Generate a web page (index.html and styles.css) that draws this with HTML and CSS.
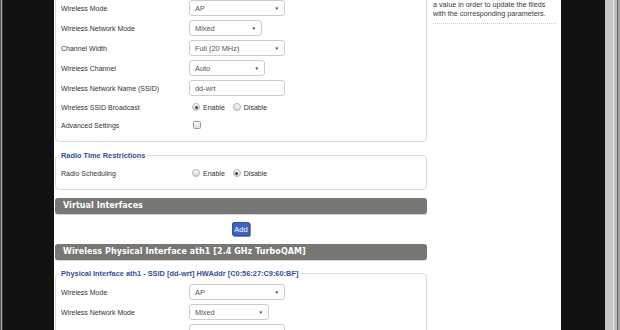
FILE: index.html
```html
<!DOCTYPE html>
<html lang="en">
<head>
    <meta charset="UTF-8">
    <meta name="viewport" content="width=device-width, initial-scale=1.0">
    <title>Wireless - Basic Settings</title>
    <link rel="stylesheet" href="styles.css">
</head>
<body>
    <div id="frame">
        <div class="edge-left"></div>
        <div id="page">
            <div class="page-inner">
                <div class="content">
                    <fieldset class="group first">
                        <legend>Physical Interface ath0 - SSID [dd-wrt] HWAddr [C0:56:27:C9:60:BE]</legend>
                        <div class="row">
                            <span class="label">Wireless Mode</span>
                            <span class="select w96"><span>AP</span><span class="arrow">&#9660;</span></span>
                        </div>
                        <div class="row">
                            <span class="label">Wireless Network Mode</span>
                            <span class="select w73"><span>Mixed</span><span class="arrow">&#9660;</span></span>
                        </div>
                        <div class="row">
                            <span class="label">Channel Width</span>
                            <span class="select w96"><span>Full (20 MHz)</span><span class="arrow">&#9660;</span></span>
                        </div>
                        <div class="row">
                            <span class="label">Wireless Channel</span>
                            <span class="select w76"><span>Auto</span><span class="arrow">&#9660;</span></span>
                        </div>
                        <div class="row">
                            <span class="label">Wireless Network Name (SSID)</span>
                            <span class="textbox w96">dd-wrt</span>
                        </div>
                        <div class="row short">
                            <span class="label">Wireless SSID Broadcast</span>
                            <span class="radio on"></span><span class="opt">Enable</span>
                            <span class="radio"></span><span class="opt">Disable</span>
                        </div>
                        <div class="row short">
                            <span class="label">Advanced Settings</span>
                            <span class="checkbox"></span>
                        </div>
                    </fieldset>

                    <fieldset class="group">
                        <legend>Radio Time Restrictions</legend>
                        <div class="row short">
                            <span class="label">Radio Scheduling</span>
                            <span class="radio"></span><span class="opt">Enable</span>
                            <span class="radio on"></span><span class="opt">Disable</span>
                        </div>
                    </fieldset>

                    <h2 class="bar">Virtual Interfaces</h2>
                    <div class="actions">
                        <button class="btn">Add</button>
                    </div>

                    <h2 class="bar">Wireless Physical Interface ath1 [2.4 GHz TurboQAM]</h2>
                    <fieldset class="group">
                        <legend>Physical Interface ath1 - SSID [dd-wrt] HWAddr [C0:56:27:C9:60:BF]</legend>
                        <div class="row">
                            <span class="label">Wireless Mode</span>
                            <span class="select w96"><span>AP</span><span class="arrow">&#9660;</span></span>
                        </div>
                        <div class="row">
                            <span class="label">Wireless Network Mode</span>
                            <span class="select w80"><span>Mixed</span><span class="arrow">&#9660;</span></span>
                        </div>
                        <div class="row">
                            <span class="label">Channel Width</span>
                            <span class="select w96"><span>Full (20 MHz)</span><span class="arrow">&#9660;</span></span>
                        </div>
                        <div class="row">
                            <span class="label">Wireless Channel</span>
                            <span class="select w76"><span>Auto</span><span class="arrow">&#9660;</span></span>
                        </div>
                    </fieldset>
                </div>

                <div class="help">
                    <p>Wireless Mode: choose the working mode<br>
                    of the radio; you may also simply pick up<br>
                    a value in order to update the fileds<br>
                    with the corresponding parameters.</p>
                </div>
            </div>
        </div>
        <div class="edge-right"></div>
        <div class="scrollbar"></div>
    </div>
</body>
</html>
```

FILE: styles.css
```css
body {
    margin: 0;
    padding: 0;
    font-family: "Liberation Sans", Arial, sans-serif;
    font-size: 7px;
    line-height: 9px;
    color: #333;
    background-color: #111;
}
#frame {
    display: flex;
    height: 330px;
    overflow: hidden;
}
.edge-left {
    width: 54px;
    background: linear-gradient(to right, #555 0, #555 1px, #a8a8a8 1px, #a8a8a8 2px, #3a3a3a 2px, #3a3a3a 3px, #121212 3px);
}
#page {
    width: 507px;
    background-color: #fff;
    overflow: hidden;
}
.page-inner {
    display: flex;
    margin-top: -22px;
}
.content {
    width: 372px;
    margin-left: 1px;
}
.edge-right {
    width: 44px;
    background-color: #121212;
}
.scrollbar {
    width: 15px;
    background: linear-gradient(to right, #c6c6c6 0, #c6c6c6 8px, #ececec 8px, #ececec 9px, #bdbdbd 9px, #bdbdbd 12px, #6a6a6a 12px, #6a6a6a 13px, #a0a0a0 13px);
}

/* groups */
.group {
    margin: 9px 0 0 0;
    padding: 4px 5px 7px 5px;
    border: 1px solid #ddd;
    border-radius: 4px;
}
.group.first {
    margin-top: 0;
    padding-top: 11px;
}
.group legend {
    margin-left: -2px;
    padding: 0 2px;
    font-size: 7.4px;
    line-height: 9px;
    font-weight: bold;
    color: #2f4f9f;
}
.row {
    display: flex;
    align-items: center;
    height: 20px;
}
.row.short {
    height: 18px;
}
.label {
    width: 128px;
    flex-shrink: 0;
}

/* controls */
.select,
.textbox {
    display: flex;
    align-items: center;
    justify-content: space-between;
    box-sizing: border-box;
    height: 16px;
    padding: 0 5px;
    border: 1px solid #ccc;
    border-radius: 3px;
    background-color: #fff;
    font-size: 7.4px;
    color: #555;
}
.arrow {
    font-size: 4.5px;
    color: #333;
}
.w96 { width: 96px; }
.w80 { width: 80px; }
.w76 { width: 76px; }
.w73 { width: 73px; }

.radio {
    display: flex;
    align-items: center;
    justify-content: center;
    box-sizing: border-box;
    width: 8px;
    height: 8px;
    margin: 0 3px 0 3px;
    border: 1px solid #b4b4b4;
    border-radius: 50%;
    background: linear-gradient(#fdfdfd, #d6d6d6);
}
.radio.on::after {
    content: '';
    width: 3px;
    height: 3px;
    border-radius: 50%;
    background-color: #444;
}
.opt {
    margin-right: 5px;
}
.checkbox {
    box-sizing: border-box;
    width: 8px;
    height: 8px;
    margin-left: 4px;
    border: 1px solid #9a9a9a;
    border-radius: 1.5px;
    background: linear-gradient(#f8f8f8, #dedede);
}

/* section bars */
.bar {
    margin: 8px 0 0 0;
    height: 16px;
    padding-left: 8px;
    border-radius: 3px;
    background-color: #797773;
    box-shadow: 0 1px 0 #d4d4d4;
    font-family: "DejaVu Sans", Verdana, sans-serif;
    font-size: 8px;
    line-height: 16px;
    font-weight: bold;
    letter-spacing: 0.06px;
    color: #fff;
}
.actions {
    display: flex;
    justify-content: center;
    padding-top: 8px;
}
.btn {
    box-sizing: border-box;
    width: 18px;
    height: 14px;
    padding: 0;
    border: 1px solid #2e51ab;
    border-radius: 2px;
    background-color: #3d63c8;
    box-shadow: 1px 1px 0 #8a8a8a;
    font-family: "Liberation Sans", Arial, sans-serif;
    font-size: 7.5px;
    color: #fff;
}

/* help column */
.help {
    width: 123px;
    margin-left: 6px;
    padding-top: 4px;
}
.help p {
    margin: 0;
    padding-bottom: 5px;
    border-bottom: 1px dotted #ccc;
    font-size: 7.2px;
    line-height: 9px;
    color: #3a3a3a;
    white-space: nowrap;
}
```
